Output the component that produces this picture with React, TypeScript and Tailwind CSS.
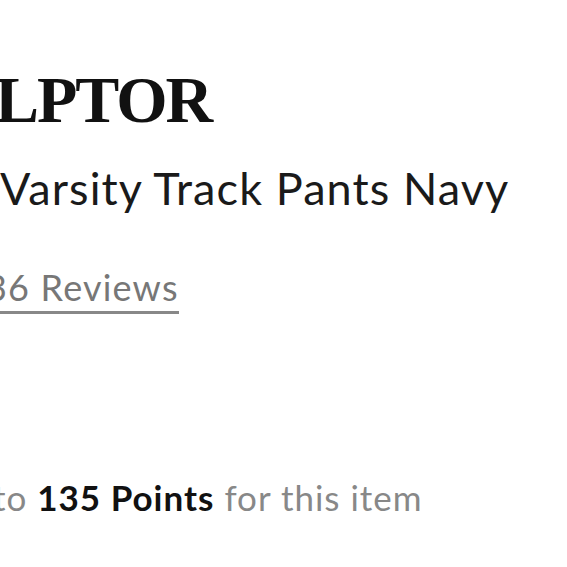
export default function App() {
  return (
    <div className="w-[567px] h-[567px] overflow-hidden bg-white">
      <div className="flex flex-col pt-[64px]">
        <div
          className="-ml-[5px] text-[66px] leading-[72px] tracking-[-2px] font-bold text-[#111111] whitespace-nowrap"
          style={{ fontFamily: '"Liberation Serif", serif' }}
        >
          LPTOR
        </div>
        <div
          className="mt-[25px] ml-[0px] text-[45px] leading-[54px] tracking-[1.1px] text-[#1a1a1a] whitespace-nowrap"
          style={{ fontFamily: 'Lato, sans-serif' }}
        >
          Varsity Track Pants Navy
        </div>
        <div
          className="mt-[50px] -ml-[14px] text-[36px] leading-[44px] tracking-[1.2px] text-[#777777] whitespace-nowrap"
          style={{ fontFamily: 'Lato, sans-serif' }}
        >
          <span className="border-b-[3px] border-[#888888] pb-[2px]">36 Reviews</span>
        </div>
        <div
          className="mt-[166px] -ml-[7px] text-[35px] leading-[44px] tracking-[1px] text-[#888888] whitespace-nowrap"
          style={{ fontFamily: 'Lato, sans-serif' }}
        >
          to <span className="font-bold text-[#111111]">135 Points</span> for this item
        </div>
      </div>
    </div>
  );
}
